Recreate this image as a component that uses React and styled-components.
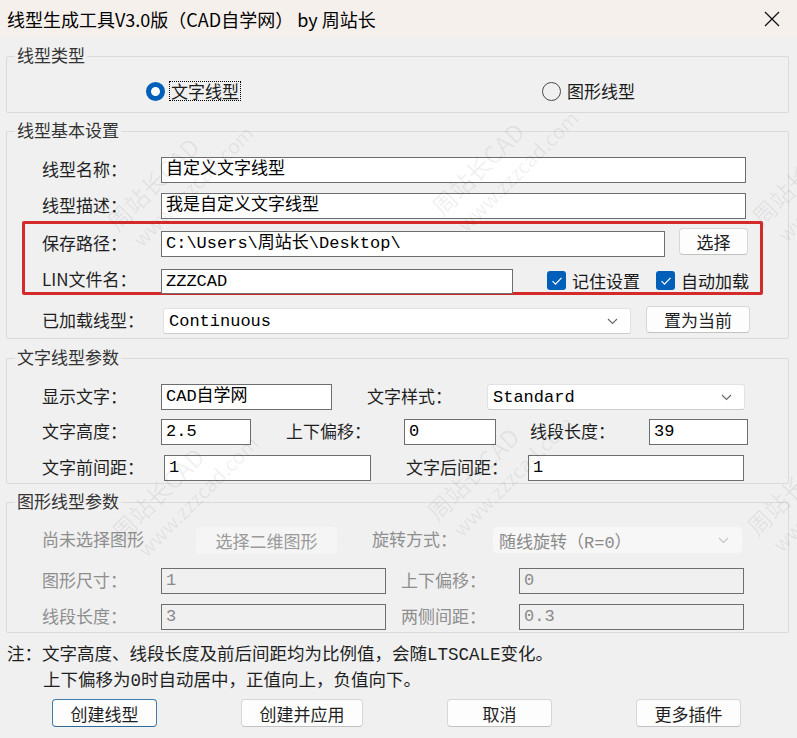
import React from 'react';
import styled, { createGlobalStyle } from 'styled-components';

const GlobalStyle = createGlobalStyle`
  body { margin: 0; background: #f0f0f0; }
`;

const Window = styled.div`
  position: relative;
  width: 797px;
  height: 738px;
  overflow: hidden;
  background: #f0f0f0;
  color: #1a1a1a;
  font-family: "Liberation Mono", "Noto Sans CJK SC", monospace;
  font-size: 17px;
`;

const TitleBar = styled.div`
  height: 37px;
  display: flex;
  align-items: center;
  justify-content: space-between;
  padding: 0 17px 0 7px;
  background: #f6f0ed;
`;

const Title = styled.div`
  font-family: "Noto Sans CJK SC", "Noto Sans", sans-serif;
  font-size: 18px;
  color: #000;
  white-space: nowrap;
`;

const Body = styled.div`
  padding: 19px 8px 0 6px;
`;

const Group = styled.div`
  position: relative;
  border: 1px solid #dadada;
  border-radius: 2px;
  margin-top: ${p => p.$mt || 0}px;
  padding: ${p => p.$pad};
`;

const GroupTitle = styled.span`
  position: absolute;
  top: -13px;
  left: 8px;
  padding: 0 2px;
  background: #f0f0f0;
  line-height: 22px;
  font-family: "Noto Sans CJK SC", sans-serif;
  font-size: 17px;
  color: #333;
`;

const RadioRow = styled.div`
  display: grid;
  grid-template-columns: 396px auto;
  align-items: center;
  height: 20px;
`;

const RadioOpt = styled.div`
  display: flex;
  align-items: center;
  gap: 4px;
`;

const RadioDot = styled.span`
  box-sizing: border-box;
  width: 19px;
  height: 19px;
  border-radius: 50%;
  ${p => p.$on
    ? 'background: #fff; border: 5.5px solid #005fb8;'
    : 'background: transparent; border: 1px solid #4a4a4a;'}
`;

const RadioText = styled.span`
  padding: 0 1px;
  line-height: 18px;
  font-family: "Noto Sans CJK SC", sans-serif;
  border: 1px dotted ${p => (p.$focus ? '#000' : 'transparent')};
`;

const Row = styled.div`
  display: flex;
  align-items: center;
  height: ${p => p.$h || 26}px;
  margin-top: ${p => p.$mt || 0}px;
  padding-left: ${p => p.$pl || 0}px;
`;

const Label = styled.span`
  flex: none;
  width: ${p => p.$w}px;
  margin-left: ${p => p.$ml || 0}px;
  padding-bottom: 3px;
  font-family: "Noto Sans CJK SC", "Liberation Mono", sans-serif;
  line-height: 24px;
  white-space: nowrap;
  color: ${p => (p.$off ? '#8e8e8e' : '#1f1f1f')};
`;

const Field = styled.div`
  flex: none;
  box-sizing: border-box;
  width: ${p => p.$w}px;
  height: ${p => p.$h || 26}px;
  padding: 0 4px;
  line-height: 24px;
  border: 1px solid #6e6e6e;
  background: ${p => (p.$off ? '#f0f0f0' : '#fff')};
  color: ${p => (p.$off ? '#8a8a8a' : '#000')};
  white-space: nowrap;
  overflow: hidden;
`;

const Combo = styled.div`
  flex: none;
  box-sizing: border-box;
  display: flex;
  align-items: center;
  justify-content: space-between;
  width: ${p => p.$w}px;
  height: 26px;
  margin-left: ${p => p.$ml || 0}px;
  padding: 0 12px 0 5px;
  border: 1px solid ${p => (p.$off ? '#f7f7f7' : '#e2e2e2')};
  border-bottom-color: ${p => (p.$off ? '#f7f7f7' : '#cdcdcd')};
  border-radius: 3px;
  background: ${p => (p.$off ? '#f7f7f7' : '#fff')};
  color: ${p => (p.$off ? '#8a8a8a' : '#000')};
  white-space: nowrap;
`;

const Button = styled.div`
  flex: none;
  box-sizing: border-box;
  display: flex;
  align-items: center;
  justify-content: center;
  width: ${p => p.$w}px;
  height: ${p => p.$h || 28}px;
  margin-left: ${p => p.$ml || 0}px;
  border: 1px solid ${p => (p.$off ? '#f5f5f5' : p.$primary ? '#3f7db0' : '#d6d6d6')};
  border-bottom-color: ${p => (p.$off ? '#f5f5f5' : p.$primary ? '#2f6a9c' : '#c2c2c2')};
  border-radius: 4px;
  background: ${p => (p.$off ? '#f5f5f5' : '#fdfdfd')};
  color: ${p => (p.$off ? '#9a9a9a' : '#1f1f1f')};
  font-family: "Noto Sans CJK SC", sans-serif;
  white-space: nowrap;
`;

const Highlight = styled.div`
  margin: 2px 25px 0 15px;
  padding: 7px 0 0 17px;
  border: 3px solid #d42a2a;
  border-radius: 2px;
`;

const Checks = styled.div`
  display: flex;
  align-items: center;
  align-self: flex-start;
  margin: -1px 0 0 34px;
  gap: 6px;
`;

const CheckBox = styled.span`
  display: flex;
  align-items: center;
  justify-content: center;
  width: 19px;
  height: 19px;
  border-radius: 3px;
  background: #005fb8;
`;

const CheckText = styled.span`
  margin-right: ${p => p.$mr || 0}px;
  font-family: "Noto Sans CJK SC", sans-serif;
  white-space: nowrap;
`;

const Note = styled.div`
  margin-top: 9px;
  font-size: 17.5px;
  line-height: 26px;
  color: #1f1f1f;
  padding-left: 1px;
`;

const NoteLine = styled.div`
  padding-left: ${p => p.$indent || 0}px;
  white-space: nowrap;
`;

const Footer = styled.div`
  display: flex;
  gap: 84px;
  padding-left: 46px;
  margin-top: 5px;
`;

const Watermark = styled.div`
  position: absolute;
  inset: 0;
  pointer-events: none;
  overflow: hidden;
`;

const Mark = styled.div`
  position: absolute;
  transform: rotate(-45deg);
  transform-origin: 0 0;
  color: rgba(0, 0, 0, 0.065);
  font-family: "Noto Sans CJK SC", "Noto Sans", sans-serif;
  white-space: nowrap;
  line-height: 30px;
`;

const MarkLine = styled.div`
  font-size: ${p => p.$size}px;
  padding-left: ${p => p.$indent || 0}px;
`;

const Chevron = ({ light }) => (
  <svg width="11" height="7" viewBox="0 0 11 7">
    <path d="M1 1l4.5 4.5L10 1" fill="none" stroke={light ? '#c4c4c4' : '#666'} strokeWidth="1.1" />
  </svg>
);

const Tick = () => (
  <svg width="12" height="10" viewBox="0 0 12 10">
    <path d="M1.5 5.2l3 3L10.5 1.8" fill="none" stroke="#fff" strokeWidth="1.2" />
  </svg>
);

const CloseIcon = () => (
  <svg width="16" height="16" viewBox="0 0 16 16">
    <path d="M1 1l14 14M15 1L1 15" stroke="#111" strokeWidth="1.3" />
  </svg>
);

const marks = [
  { x: 100, y: 215 }, { x: 425, y: 200 }, { x: 745, y: 210 },
  { x: 105, y: 525 }, { x: 420, y: 505 }, { x: 740, y: 520 },
];

export default function App() {
  return (
    <Window>
      <GlobalStyle />
      <TitleBar>
        <Title>线型生成工具V3.0版（CAD自学网） by 周站长</Title>
        <CloseIcon />
      </TitleBar>

      <Body>
        <Group $pad="24px 0 11px 139px">
          <GroupTitle>线型类型</GroupTitle>
          <RadioRow>
            <RadioOpt>
              <RadioDot $on />
              <RadioText $focus>文字线型</RadioText>
            </RadioOpt>
            <RadioOpt>
              <RadioDot />
              <RadioText>图形线型</RadioText>
            </RadioOpt>
          </RadioRow>
        </Group>

        <Group $mt={18} $pad="25px 0 4px 0">
          <GroupTitle>线型基本设置</GroupTitle>
          <Row $pl={35}>
            <Label $w={119}>线型名称：</Label>
            <Field $w={585}>自定义文字线型</Field>
          </Row>
          <Row $mt={10} $pl={35}>
            <Label $w={119}>线型描述：</Label>
            <Field $w={585}>我是自定义文字线型</Field>
          </Row>
          <Highlight>
            <Row>
              <Label $w={119}>保存路径：</Label>
              <Field $w={504}>C:\Users\周站长\Desktop\</Field>
              <Button $w={69} $h={27} $ml={14} style={{ alignSelf: 'flex-start', marginTop: -3 }}>选择</Button>
            </Row>
            <Row $h={23} $mt={12}>
              <Label $w={119}>LIN文件名：</Label>
              <Field $w={352} $h={25} style={{ alignSelf: 'flex-start' }}>ZZZCAD</Field>
              <Checks>
                <CheckBox><Tick /></CheckBox>
                <CheckText $mr={10}>记住设置</CheckText>
                <CheckBox><Tick /></CheckBox>
                <CheckText>自动加载</CheckText>
              </Checks>
            </Row>
          </Highlight>
          <Row $mt={13} $pl={35}>
            <Label $w={121}>已加载线型：</Label>
            <Combo $w={468}>Continuous<Chevron /></Combo>
            <Button $w={104} $h={27} $ml={15} style={{ marginTop: -4 }}>置为当前</Button>
          </Row>
        </Group>

        <Group $mt={19} $pad="25px 0 2px 35px">
          <GroupTitle>文字线型参数</GroupTitle>
          <Row>
            <Label $w={119}>显示文字：</Label>
            <Field $w={171}>CAD自学网</Field>
            <Label $w={120} $ml={35}>文字样式：</Label>
            <Combo $w={258}>Standard<Chevron /></Combo>
          </Row>
          <Row $mt={9}>
            <Label $w={119}>文字高度：</Label>
            <Field $w={90}>2.5</Field>
            <Label $w={118} $ml={35}>上下偏移：</Label>
            <Field $w={92}>0</Field>
            <Label $w={119} $ml={34}>线段长度：</Label>
            <Field $w={99}>39</Field>
          </Row>
          <Row $mt={10}>
            <Label $w={122}>文字前间距：</Label>
            <Field $w={207}>1</Field>
            <Label $w={122} $ml={35}>文字后间距：</Label>
            <Field $w={216}>1</Field>
          </Row>
        </Group>

        <Group $mt={18} $pad="24px 0 2px 35px">
          <GroupTitle>图形线型参数</GroupTitle>
          <Row>
            <Label $w={154} $off>尚未选择图形</Label>
            <Button $w={141} $h={27} $off>选择二维图形</Button>
            <Label $w={121} $ml={35} $off>旋转方式：</Label>
            <Combo $w={249} $off>随线旋转（R=0）<Chevron light /></Combo>
          </Row>
          <Row $mt={15}>
            <Label $w={119} $off>图形尺寸：</Label>
            <Field $w={225} $off>1</Field>
            <Label $w={118} $ml={15} $off>上下偏移：</Label>
            <Field $w={225} $off>0</Field>
          </Row>
          <Row $mt={10}>
            <Label $w={119} $off>线段长度：</Label>
            <Field $w={225} $off>3</Field>
            <Label $w={118} $ml={15} $off>两侧间距：</Label>
            <Field $w={225} $off>0.3</Field>
          </Row>
        </Group>

        <Note>
          <NoteLine>注：文字高度、线段长度及前后间距均为比例值，会随LTSCALE变化。</NoteLine>
          <NoteLine $indent={36}>上下偏移为0时自动居中，正值向上，负值向下。</NoteLine>
        </Note>

        <Footer>
          <Button $w={105} $primary>创建线型</Button>
          <Button $w={122}>创建并应用</Button>
          <Button $w={105}>取消</Button>
          <Button $w={105}>更多插件</Button>
        </Footer>
      </Body>

      <Watermark>
        {marks.map((m, i) => (
          <Mark key={i} style={{ left: m.x, top: m.y }}>
            <MarkLine $size={24}>周站长CAD</MarkLine>
            <MarkLine $size={20} $indent={6}>www.zzzcad.com</MarkLine>
          </Mark>
        ))}
      </Watermark>
    </Window>
  );
}
